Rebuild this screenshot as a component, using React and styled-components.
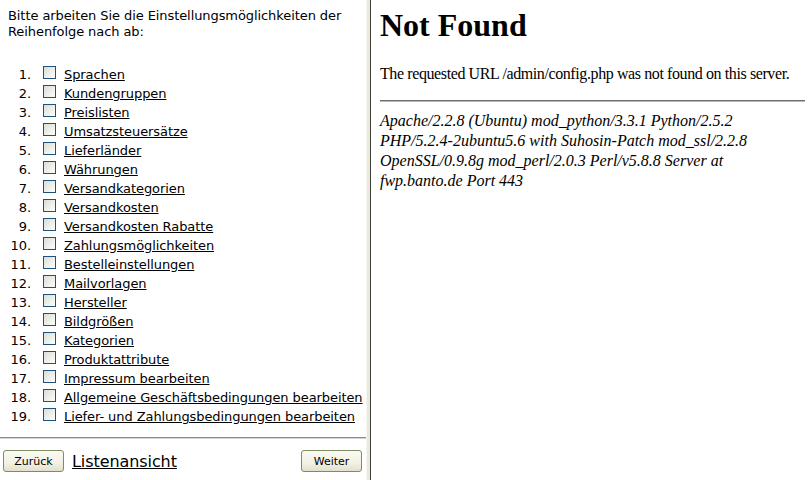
import styled, { createGlobalStyle } from "styled-components";

const steps = [
  "Sprachen",
  "Kundengruppen",
  "Preislisten",
  "Umsatzsteuersätze",
  "Lieferländer",
  "Währungen",
  "Versandkategorien",
  "Versandkosten",
  "Versandkosten Rabatte",
  "Zahlungsmöglichkeiten",
  "Bestelleinstellungen",
  "Mailvorlagen",
  "Hersteller",
  "Bildgrößen",
  "Kategorien",
  "Produktattribute",
  "Impressum bearbeiten",
  "Allgemeine Geschäftsbedingungen bearbeiten",
  "Liefer- und Zahlungsbedingungen bearbeiten",
];

const App = () => {
  return (
    <>
      <GlobalStyle />
      <Frameset>
        <LeftFrame>
          <Intro>
            Bitte arbeiten Sie die Einstellungsmöglichkeiten der
            <br />
            Reihenfolge nach ab:
          </Intro>
          <StepList>
            {steps.map((step, index) => (
              <StepRow key={index}>
                <StepNumber>{index + 1}.</StepNumber>
                <Checkbox />
                <StepLink href="#">{step}</StepLink>
              </StepRow>
            ))}
          </StepList>
          <Rule />
          <ButtonBar>
            <Button>Zurück</Button>
            <BigLink href="#">Listenansicht</BigLink>
            <Spacer />
            <Button>Weiter</Button>
          </ButtonBar>
        </LeftFrame>
        <FrameBorder />
        <RightFrame>
          <Title>Not Found</Title>
          <Message>
            The requested URL /admin/config.php was not found on this server.
          </Message>
          <ServerRule />
          <Address>
            Apache/2.2.8 (Ubuntu) mod_python/3.3.1 Python/2.5.2
            <br />
            PHP/5.2.4-2ubuntu5.6 with Suhosin-Patch mod_ssl/2.2.8
            <br />
            OpenSSL/0.9.8g mod_perl/2.0.3 Perl/v5.8.8 Server at
            <br />
            fwp.banto.de Port 443
          </Address>
        </RightFrame>
      </Frameset>
    </>
  );
};

export default App;

const GlobalStyle = createGlobalStyle`
  html, body {
    margin: 0;
    padding: 0;
    background: #ffffff;
    overflow: hidden;
  }
`;

const Frameset = styled.div`
  display: flex;
  width: 809px;
  height: 480px;
`;

const LeftFrame = styled.div`
  flex: 0 0 366px;
  width: 366px;
  display: flex;
  flex-direction: column;
  font-family: "DejaVu Sans", Verdana, sans-serif;
  font-size: 13px;
  letter-spacing: -0.08px;
  color: #000;
`;

const Intro = styled.p`
  margin: 0;
  padding: 8px 8px 0 8px;
  line-height: 16px;
`;

const StepList = styled.ol`
  list-style: none;
  margin: 25px 0 0 0;
  padding: 0;
`;

const StepRow = styled.li`
  display: flex;
  align-items: flex-start;
  height: 19px;
  line-height: 19px;
  white-space: nowrap;
`;

const StepNumber = styled.span`
  width: 31px;
  text-align: right;
`;

const Checkbox = styled.span`
  box-sizing: border-box;
  width: 13px;
  height: 13px;
  margin: 1px 8px 0 12px;
  border: 1px solid #1c5180;
  background: linear-gradient(135deg, #dcdcd7 0%, #f0f0ec 60%, #ffffff 100%);
`;

const StepLink = styled.a`
  color: #000;
  text-decoration: underline;
`;

const Rule = styled.hr`
  margin: 11px 0 0 0;
  height: 0;
  border: none;
  border-top: 1px solid #8c8c8c;
  border-bottom: 1px solid #d4d4d4;
`;

const ButtonBar = styled.div`
  display: flex;
  align-items: center;
  padding: 11px 4px 0 3px;
`;

const Button = styled.button`
  box-sizing: border-box;
  width: 61px;
  height: 22px;
  padding: 0;
  font-family: "DejaVu Sans", Tahoma, sans-serif;
  font-size: 11px;
  color: #000;
  border: 1px solid #7f8c62;
  border-radius: 3px;
  background: linear-gradient(180deg, #fafaf2 0%, #f2f1e4 60%, #e2e0cc 100%);
`;

const BigLink = styled.a`
  margin-left: 8px;
  font-size: 16px;
  color: #000;
  text-decoration: underline;
`;

const Spacer = styled.div`
  flex: 1;
`;

const FrameBorder = styled.div`
  flex: 0 0 5px;
  height: 100%;
  box-sizing: border-box;
  background: #ece9d8;
  border-left: 1px solid #f7f6ef;
  border-right: 1px solid #404040;
`;

const RightFrame = styled.div`
  flex: 1;
  min-width: 0;
  overflow: hidden;
  padding: 7px 4px 0 9px;
  font-family: "Liberation Serif", "Times New Roman", serif;
  font-size: 16px;
  color: #000;
`;

const Title = styled.h1`
  margin: 0;
  font-size: 32px;
  line-height: 36px;
  font-weight: bold;
`;

const Message = styled.p`
  margin: 22px 0 0 0;
  white-space: nowrap;
  letter-spacing: -0.4px;
`;

const ServerRule = styled.hr`
  margin: 17px 0 0 0;
  height: 0;
  border: none;
  border-top: 1px solid #6e6e6e;
  border-bottom: 1px solid #b8b8b8;
`;

const Address = styled.address`
  margin-top: 9px;
  font-style: italic;
  line-height: 20px;
  white-space: nowrap;
`;
